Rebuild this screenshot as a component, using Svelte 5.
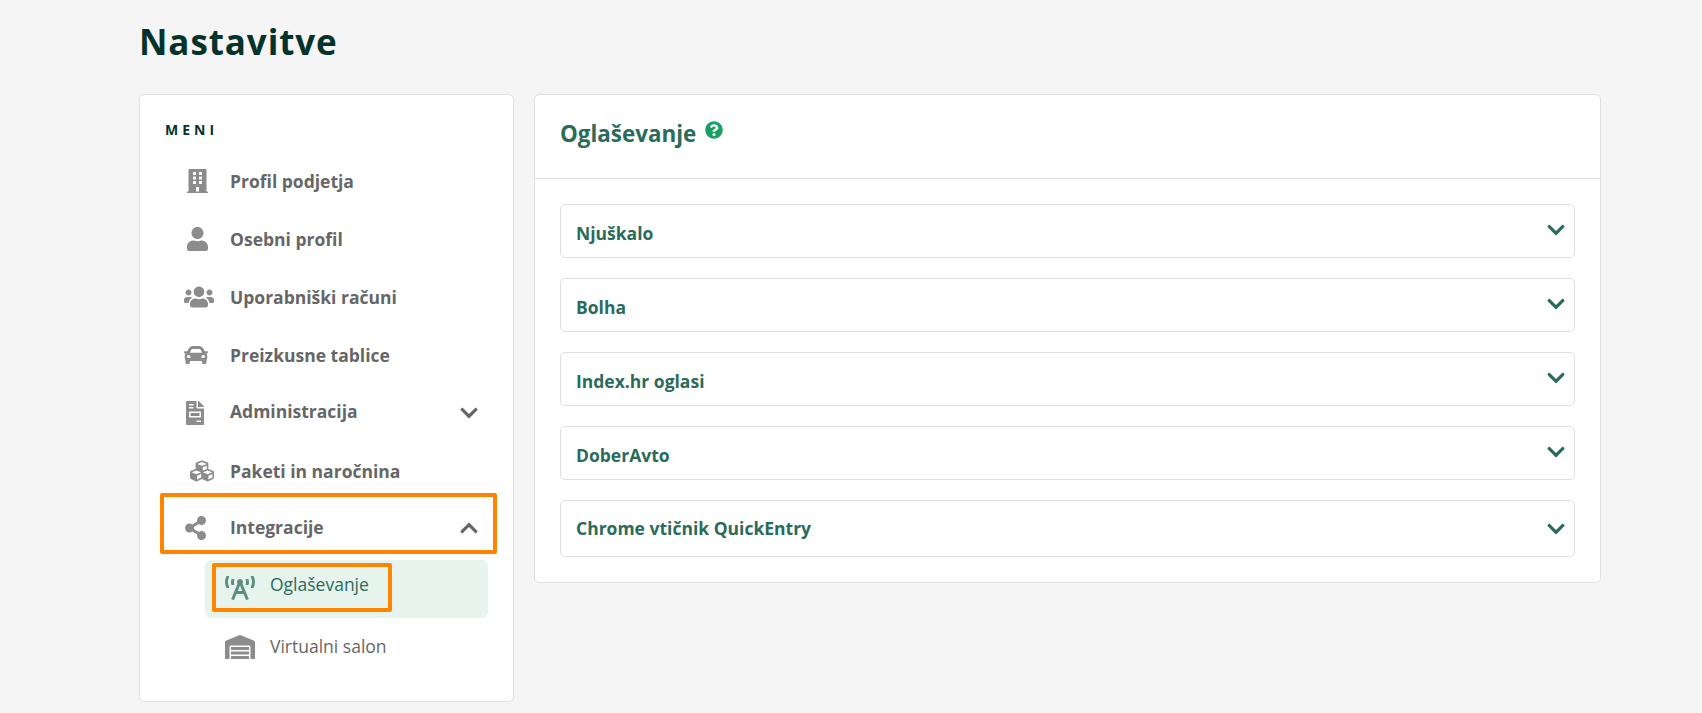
<script>
  const P = {
    building: ['0 0 448 512', 'M436 480h-20V24c0-13.255-10.745-24-24-24H56C42.745 0 32 10.745 32 24v456H12c-6.627 0-12 5.373-12 12v20h448v-20c0-6.627-5.373-12-12-12zM128 76c0-6.627 5.373-12 12-12h40c6.627 0 12 5.373 12 12v40c0 6.627-5.373 12-12 12h-40c-6.627 0-12-5.373-12-12V76zm0 96c0-6.627 5.373-12 12-12h40c6.627 0 12 5.373 12 12v40c0 6.627-5.373 12-12 12h-40c-6.627 0-12-5.373-12-12v-40zm52 148h-40c-6.627 0-12-5.373-12-12v-40c0-6.627 5.373-12 12-12h40c6.627 0 12 5.373 12 12v40c0 6.627-5.373 12-12 12zm76 160h-64v-84c0-6.627 5.373-12 12-12h40c6.627 0 12 5.373 12 12v84zm64-172c0 6.627-5.373 12-12 12h-40c-6.627 0-12-5.373-12-12v-40c0-6.627 5.373-12 12-12h40c6.627 0 12 5.373 12 12v40zm0-96c0 6.627-5.373 12-12 12h-40c-6.627 0-12-5.373-12-12v-40c0-6.627 5.373-12 12-12h40c6.627 0 12 5.373 12 12v40zm0-96c0 6.627-5.373 12-12 12h-40c-6.627 0-12-5.373-12-12V76c0-6.627 5.373-12 12-12h40c6.627 0 12 5.373 12 12v40z'],
    user: ['0 0 448 512', 'M224 256c70.7 0 128-57.3 128-128S294.7 0 224 0 96 57.3 96 128s57.3 128 128 128zm89.6 32h-16.7c-22.2 10.2-46.9 16-72.9 16s-50.6-5.8-72.9-16h-16.7C60.2 288 0 348.2 0 422.4V464c0 26.5 21.5 48 48 48h352c26.5 0 48-21.5 48-48v-41.6c0-74.2-60.2-134.4-134.4-134.4z'],
    users: ['0 0 640 512', 'M96 224c35.3 0 64-28.7 64-64s-28.7-64-64-64-64 28.7-64 64 28.7 64 64 64zm448 0c35.3 0 64-28.7 64-64s-28.7-64-64-64-64 28.7-64 64 28.7 64 64 64zm32 32h-64c-17.6 0-33.5 7.1-45.1 18.6 40.3 22.1 68.9 62 75.1 109.4h66c17.7 0 32-14.3 32-32v-32c0-35.3-28.7-64-64-64zm-256 0c61.9 0 112-50.1 112-112S381.9 32 320 32 208 82.1 208 144s50.1 112 112 112zm76.8 32h-8.3c-20.8 10-43.9 16-68.5 16s-47.6-6-68.5-16h-8.3C179.6 288 128 339.6 128 403.2V432c0 26.5 21.5 48 48 48h288c26.5 0 48-21.5 48-48v-28.8c0-63.6-51.6-115.2-115.2-115.2zm-223.7-13.4C161.5 263.1 145.6 256 128 256H64c-35.3 0-64 28.7-64 64v32c0 17.7 14.3 32 32 32h65.9c6.3-47.4 34.9-87.3 75.2-109.4z'],
    car: ['0 0 512 512', 'M499.99 176h-59.87l-16.64-41.6C406.38 91.63 365.57 64 319.5 64h-127c-46.06 0-86.88 27.63-103.99 70.4L71.87 176H12.01C4.2 176-1.53 183.34.37 190.91l6 24C7.7 220.25 12.5 224 18.01 224h20.07C24.65 235.73 16 252.78 16 272v48c0 16.12 6.16 30.67 16 41.93V416c0 17.67 14.33 32 32 32h32c17.67 0 32-14.33 32-32v-32h256v32c0 17.67 14.33 32 32 32h32c17.67 0 32-14.33 32-32v-54.07c9.84-11.25 16-25.8 16-41.93v-48c0-19.22-8.65-36.27-22.07-48H494c5.51 0 10.31-3.75 11.64-9.09l6-24c1.89-7.57-3.84-14.91-11.65-14.91zm-352.06-17.83c7.29-18.22 24.94-30.17 44.57-30.17h127c19.63 0 37.28 11.95 44.57 30.17L384 208H128l19.93-49.83zM96 319.8c-19.2 0-32-12.76-32-31.9S76.8 256 96 256s48 28.71 48 47.85-28.8 15.95-48 15.95zm320 0c-19.2 0-48 3.19-48-15.95S396.8 256 416 256s32 12.76 32 31.9-12.8 31.9-32 31.9z'],
    file: ['0 0 384 512', 'M288 256H96v64h192v-64zm89-151L279.1 7c-4.5-4.5-10.6-7-17-7H256v128h128v-6.1c0-6.3-2.5-12.4-7-16.9zm-153 31V0H24C10.7 0 0 10.7 0 24v464c0 13.3 10.7 24 24 24h336c13.3 0 24-10.7 24-24V160H248c-13.2 0-24-10.8-24-24zM64 72c0-4.42 3.58-8 8-8h80c4.42 0 8 3.58 8 8v16c0 4.42-3.58 8-8 8H72c-4.42 0-8-3.58-8-8V72zm0 64c0-4.42 3.58-8 8-8h80c4.42 0 8 3.58 8 8v16c0 4.42-3.58 8-8 8H72c-4.42 0-8-3.58-8-8v-16zm256 304c0 4.42-3.58 8-8 8h-80c-4.42 0-8-3.58-8-8v-16c0-4.42 3.58-8 8-8h80c4.42 0 8 3.58 8 8v16zm0-200v96c0 8.84-7.16 16-16 16H80c-8.84 0-16-7.16-16-16v-96c0-8.84 7.16-16 16-16h224c8.84 0 16 7.16 16 16z'],
    cubes: ['0 0 512 512', 'M488.6 250.2L392 214V105.5c0-15-9.3-28.4-23.4-33.7l-100-37.5c-8.1-3.1-17.1-3.1-25.3 0l-100 37.5c-14.1 5.3-23.4 18.7-23.4 33.7V214l-96.6 36.2C9.3 255.5 0 268.9 0 283.9V394c0 13.6 7.7 26.1 19.9 32.2l100 50c10.1 5.1 22.1 5.1 32.2 0l103.9-52 103.9 52c10.1 5.1 22.1 5.1 32.2 0l100-50c12.2-6.1 19.9-18.6 19.9-32.2V283.9c0-15-9.3-28.4-23.4-33.7zM358 214.8l-85 31.9v-68.2l85-37v73.3zM154 104.1l102-38.2 102 38.2v.6l-102 41.4-102-41.4v-.6zm84 291.1l-85 42.5v-79.1l85-38.8v75.4zm0-112l-102 41.4-102-41.4v-.6l102-38.2 102 38.2v.6zm240 112l-85 42.5v-79.1l85-38.8v75.4zm0-112l-102 41.4-102-41.4v-.6l102-38.2 102 38.2v.6z'],
    share: ['0 0 448 512', 'M352 320c-22.608 0-43.387 7.819-59.79 20.895l-102.486-64.054a96.551 96.551 0 0 0 0-41.683l102.486-64.054C308.613 184.181 329.392 192 352 192c53.019 0 96-42.981 96-96S405.019 0 352 0s-96 42.981-96 96c0 7.158.79 14.13 2.276 20.841L155.79 180.895C139.387 167.819 118.608 160 96 160c-53.019 0-96 42.981-96 96s42.981 96 96 96c22.608 0 43.387-7.819 59.79-20.895l102.486 64.054A96.301 96.301 0 0 0 256 416c0 53.019 42.981 96 96 96s96-42.981 96-96-42.981-96-96-96z'],
    tower: ['0 0 640 512', 'M150.94 192h33.73c11.01 0 18.61-10.83 14.86-21.18-4.93-13.58-7.55-27.98-7.55-42.82s2.62-29.24 7.55-42.82C203.29 74.83 195.68 64 184.67 64h-33.73c-7.01 0-13.46 4.49-15.41 11.23C130.64 92.21 128 109.88 128 128c0 18.12 2.64 35.79 7.54 52.76 1.94 6.74 8.39 11.24 15.4 11.24zM89.92 23.34C95.56 12.72 87.97 0 75.96 0H40.63c-6.27 0-12.14 3.59-14.74 9.31C9.4 45.54 0 85.65 0 128c0 24.75 3.12 68.33 26.69 118.86 2.62 5.63 8.42 9.14 14.61 9.14h34.84c12.02 0 19.61-12.74 13.95-23.37-49.78-93.32-16.71-178.15-.17-209.29zM614.06 9.29C611.46 3.58 605.6 0 599.33 0h-35.42c-11.98 0-19.66 12.66-14.02 23.25 18.27 34.29 48.42 119.42.28 209.23-5.72 10.68 1.8 23.52 13.91 23.52h35.23c6.27 0 12.13-3.58 14.73-9.29C630.57 210.48 640 170.36 640 128s-9.42-82.48-25.94-118.71zM489.06 64h-33.73c-11.01 0-18.61 10.83-14.86 21.18 4.93 13.58 7.55 27.98 7.55 42.82s-2.62 29.24-7.55 42.82c-3.76 10.35 3.85 21.18 14.86 21.18h33.73c7.02 0 13.46-4.49 15.41-11.24 4.9-16.97 7.53-34.64 7.53-52.76 0-18.12-2.64-35.79-7.54-52.76-1.94-6.75-8.39-11.24-15.4-11.24zm-116.3 100.12c7.05-10.29 11.2-22.71 11.2-36.12 0-35.35-28.63-64-63.96-64-35.32 0-63.96 28.65-63.96 64 0 13.41 4.15 25.83 11.2 36.12l-130.5 313.41c-3.4 8.15.46 17.52 8.61 20.92l29.51 12.31c8.15 3.4 17.52-.46 20.91-8.61L244.96 384h150.07l49.2 118.15c3.4 8.16 12.76 12.01 20.91 8.61l29.51-12.31c8.15-3.4 12-12.77 8.61-20.92l-130.5-313.41zM271.62 320L320 203.81 368.38 320h-96.76z'],
    warehouse: ['0 0 640 512', 'M504 352H136.4c-4.4 0-8 3.6-8 8l-.1 48c0 4.4 3.6 8 8 8H504c4.4 0 8-3.6 8-8v-48c0-4.4-3.6-8-8-8zm0 96H136.1c-4.4 0-8 3.6-8 8l-.1 48c0 4.4 3.6 8 8 8h368c4.4 0 8-3.6 8-8v-48c0-4.4-3.6-8-8-8zm0-192H136.6c-4.4 0-8 3.6-8 8l-.1 48c0 4.4 3.6 8 8 8H504c4.4 0 8-3.6 8-8v-48c0-4.4-3.6-8-8-8zm106.5-139L338.4 3.7a48.15 48.15 0 0 0-36.9 0L29.5 117C11.7 124.5 0 141.9 0 161.3V504c0 4.4 3.6 8 8 8h80c4.4 0 8-3.6 8-8V256c0-17.6 14.6-32 32.6-32h382.8c18 0 32.6 14.4 32.6 32v248c0 4.4 3.6 8 8 8h80c4.4 0 8-3.6 8-8V161.3c0-19.4-11.7-36.8-29.5-44.3z'],
    down: ['0 0 448 512', 'M207.029 381.476L12.686 187.132c-9.373-9.373-9.373-24.569 0-33.941l22.667-22.667c9.357-9.357 24.522-9.375 33.901-.04L224 284.505l154.745-154.021c9.379-9.335 24.544-9.317 33.901.04l22.667 22.667c9.373 9.373 9.373 24.569 0 33.941L240.971 381.476c-9.373 9.372-24.569 9.372-33.942 0z'],
    help: ['0 0 512 512', 'M504 256c0 136.997-111.043 248-248 248S8 392.997 8 256C8 119.083 119.043 8 256 8s248 111.083 248 248zM262.655 90c-54.497 0-89.255 22.957-116.549 63.758-3.536 5.286-2.353 12.415 2.715 16.258l34.699 26.31c5.205 3.947 12.621 3.008 16.665-2.122 17.864-22.658 30.113-35.797 57.303-35.797 20.429 0 45.698 13.148 45.698 32.958 0 14.976-12.363 22.667-32.534 33.976C247.128 238.528 216 254.941 216 296v4c0 6.627 5.373 12 12 12h56c6.627 0 12-5.373 12-12v-1.333c0-28.462 83.186-29.647 83.186-106.667 0-58.002-60.165-102-116.531-102zM256 338c-25.365 0-46 20.635-46 46 0 25.364 20.635 46 46 46s46-20.636 46-46c0-25.365-20.635-46-46-46z']
  };
  const menu = [
    { label: 'Profil podjetja', icon: 'building', off: 2.5, h: 58 },
    { label: 'Osebni profil', icon: 'user', off: 2.5, h: 58 },
    { label: 'Uporabniški računi', icon: 'users', off: 0, h: 58 },
    { label: 'Preizkusne tablice', icon: 'car', off: 0, h: 58 },
    { label: 'Administracija', icon: 'file', off: 1.5, h: 58, chev: 'down', lift: 4 },
    { label: 'Paketi in naročnina', icon: 'cubes', off: 5.5, h: 58 },
    { label: 'Integracije', icon: 'share', off: 0.5, h: 55, chev: 'up', lift: 2 }
  ];
  const acc = ['Njuškalo', 'Bolha', 'Index.hr oglasi', 'DoberAvto', 'Chrome vtičnik QuickEntry'];
</script>

{#snippet icon(name, cls)}
  <svg class={cls} viewBox={P[name][0]} aria-hidden="true"><path d={P[name][1]} /></svg>
{/snippet}

<div class="page">
  <h1>Nastavitve</h1>
  <div class="cols">
    <aside class="card side">
      <div class="menu-label">MENI</div>
      <nav class="rows">
        {#each menu as m}
          <div class="row" style:height="{m.h}px">
            <span class="ico" style:padding-left="{m.off}px">{@render icon(m.icon, 'i24')}</span>
            <span class="lbl" style:margin-bottom="{m.lift ?? 0}px">{m.label}</span>
            {#if m.chev}
              {@render icon('down', m.chev === 'up' ? 'chev flip' : 'chev')}
            {/if}
          </div>
        {/each}
      </nav>
      <div class="sub active">
        {@render icon('tower', 'i24')}
        <span>Oglaševanje</span>
      </div>
      <div class="sub plain">
        {@render icon('warehouse', 'i24')}
        <span>Virtualni salon</span>
      </div>
      <div class="mark mark-a"></div>
      <div class="mark mark-b"></div>
    </aside>

    <main class="card panel">
      <header class="head">
        <h2>Oglaševanje</h2>
        {@render icon('help', 'help')}
      </header>
      <div class="list">
        {#each acc as a, i}
          <div class="item" class:tall={i === acc.length - 1}>
            <span>{a}</span>
            {@render icon('down', 'chev green')}
          </div>
        {/each}
      </div>
    </main>
  </div>
</div>

<style>
  :global(body) {
    margin: 0;
    background: #f5f5f5;
    font-family: "Open Sans", "Liberation Sans", sans-serif;
  }
  .page {
    padding-left: 139px;
    width: 1462px;
    height: 713px;
    overflow: hidden;
  }
  h1 {
    margin: 0;
    padding-top: 17px;
    height: 94px;
    box-sizing: border-box;
    font-size: 35px;
    line-height: 49px;
    font-weight: 700;
    letter-spacing: 0.9px;
    color: #04332c;
  }
  .cols {
    display: flex;
    gap: 20px;
    align-items: flex-start;
  }
  .card {
    background: #fff;
    border: 1px solid #e0e0e0;
    border-radius: 5px;
    box-sizing: border-box;
  }
  .side {
    position: relative;
    width: 375px;
    height: 608px;
    padding: 25px 24px 0 25px;
  }
  .menu-label {
    font-size: 14px;
    line-height: 20px;
    font-weight: 700;
    letter-spacing: 4px;
    color: #04332c;
    margin-bottom: 12px;
  }
  .row {
    display: flex;
    align-items: center;
    padding: 0 11px 0 19px;
    color: #666;
    font-size: 17.5px;
    font-weight: 700;
  }
  .ico {
    width: 46px;
    flex: none;
    display: flex;
    box-sizing: border-box;
  }
  .lbl { flex: 1; }
  .i24 {
    height: 24px;
    fill: #8c8c8c;
    display: block;
    flex: none;
  }
  .chev {
    width: 18px;
    height: 20px;
    fill: #666;
    flex: none;
  }
  .flip { transform: scaleY(-1); }
  .green { fill: #2a6b5a; }
  .sub {
    margin-left: 40px;
    width: 283px;
    height: 58px;
    box-sizing: border-box;
    padding-left: 20px;
    display: flex;
    align-items: center;
    gap: 15px;
    font-size: 17.5px;
    color: #666;
    border-radius: 6px;
  }
  .active {
    margin-top: 5px;
    background: #e7f3ed;
    color: #2a6b5a;
  }
  .active .i24 { fill: #5c8f7f; margin-bottom: 2px; }
  .active span { margin-bottom: 10px; }
  .plain .i24 { margin-bottom: 0; }
  .plain span { margin-bottom: 2px; }
  .mark {
    position: absolute;
    border: 4px solid #ff8400;
    border-radius: 2px;
    box-sizing: border-box;
  }
  .mark-a { left: 20px; top: 398px; width: 337px; height: 61px; }
  .mark-b { left: 72px; top: 468px; width: 180px; height: 49px; }
  .panel { width: 1067px; }
  .head {
    height: 84px;
    box-sizing: border-box;
    border-bottom: 1px solid #e0e0e0;
    display: flex;
    align-items: flex-start;
    padding: 22px 25px 0;
    gap: 9px;
  }
  h2 {
    margin: 0;
    font-size: 22.4px;
    line-height: 34px;
    font-weight: 700;
    color: #2a6b5a;
  }
  .help {
    width: 18px;
    height: 18px;
    fill: #1b9e63;
    margin-top: 4px;
  }
  .list {
    padding: 25px;
    display: flex;
    flex-direction: column;
    gap: 20px;
  }
  .item {
    height: 54px;
    box-sizing: border-box;
    border: 1px solid #e0e0e0;
    border-radius: 5px;
    display: flex;
    align-items: center;
    justify-content: space-between;
    padding: 4px 9px 0 15px;
    font-size: 17.5px;
    font-weight: 700;
    color: #2a6b5a;
  }
  .item .chev { margin-top: -6px; }
  .item.tall { height: 57px; padding-top: 0; }
  .tall span { margin-bottom: 2px; }
  .item.tall .chev { margin-top: 0; }
</style>
